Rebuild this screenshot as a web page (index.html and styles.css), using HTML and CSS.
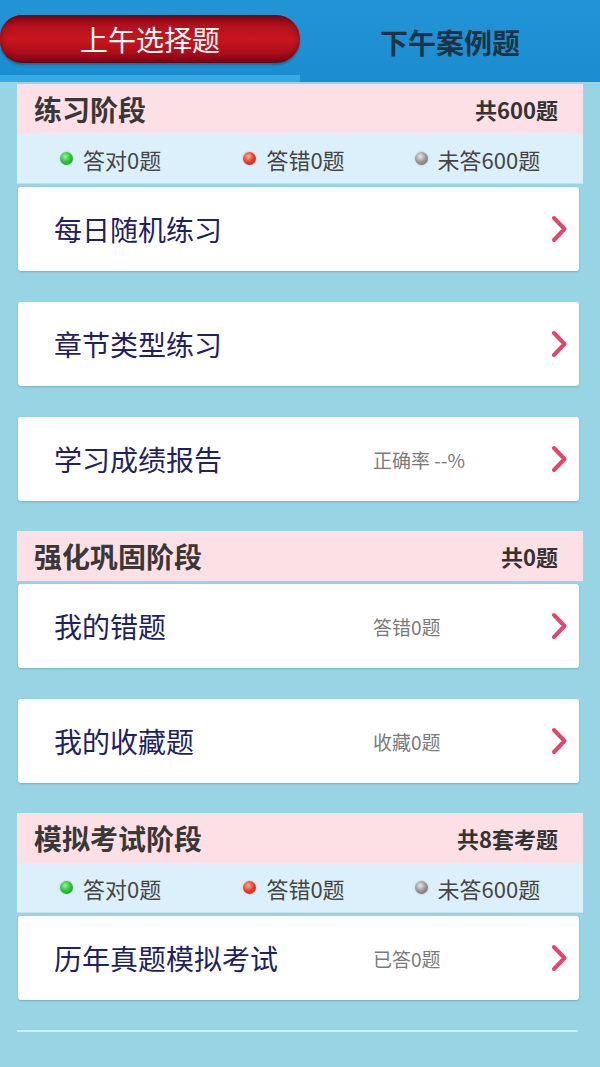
FILE: index.html
```html
<!DOCTYPE html>
<html lang="zh-CN">
<head>
<meta charset="utf-8">
<title>题库</title>
<link rel="stylesheet" href="styles.css">
</head>
<body>
<header class="tabs">
  <div class="tab tab-active">
    <div class="pill">上午选择题</div>
    <div class="indicator"></div>
  </div>
  <div class="tab tab-idle">下午案例题</div>
</header>

<main class="main">
  <section class="stage">
    <div class="stage-head"><span class="stage-title">练习阶段</span><span class="stage-count">共600题</span></div>
    <div class="stats">
      <div class="stat"><i class="dot dot-green"></i>答对0题</div>
      <div class="stat"><i class="dot dot-red"></i>答错0题</div>
      <div class="stat"><i class="dot dot-grey"></i>未答600题</div>
    </div>
    <a class="card"><span class="card-title">每日随机练习</span><span class="card-sub"></span><svg class="chev" viewBox="0 0 16 28"><path d="M3 3 L13.5 14 L3 25"/></svg></a>
    <a class="card card-gap"><span class="card-title">章节类型练习</span><span class="card-sub"></span><svg class="chev" viewBox="0 0 16 28"><path d="M3 3 L13.5 14 L3 25"/></svg></a>
    <a class="card card-gap"><span class="card-title">学习成绩报告</span><span class="card-sub">正确率 --%</span><svg class="chev" viewBox="0 0 16 28"><path d="M3 3 L13.5 14 L3 25"/></svg></a>
  </section>

  <section class="stage">
    <div class="stage-head"><span class="stage-title">强化巩固阶段</span><span class="stage-count">共0题</span></div>
    <a class="card"><span class="card-title">我的错题</span><span class="card-sub">答错0题</span><svg class="chev" viewBox="0 0 16 28"><path d="M3 3 L13.5 14 L3 25"/></svg></a>
    <a class="card card-gap"><span class="card-title">我的收藏题</span><span class="card-sub">收藏0题</span><svg class="chev" viewBox="0 0 16 28"><path d="M3 3 L13.5 14 L3 25"/></svg></a>
  </section>

  <section class="stage">
    <div class="stage-head"><span class="stage-title">模拟考试阶段</span><span class="stage-count">共8套考题</span></div>
    <div class="stats">
      <div class="stat"><i class="dot dot-green"></i>答对0题</div>
      <div class="stat"><i class="dot dot-red"></i>答错0题</div>
      <div class="stat"><i class="dot dot-grey"></i>未答600题</div>
    </div>
    <a class="card"><span class="card-title">历年真题模拟考试</span><span class="card-sub">已答0题</span><svg class="chev" viewBox="0 0 16 28"><path d="M3 3 L13.5 14 L3 25"/></svg></a>
  </section>

  <hr class="rule">
</main>
</body>
</html>
```

FILE: styles.css
```css
* { box-sizing: border-box; }

html, body {
  margin: 0;
  padding: 0;
}

body {
  width: 600px;
  min-height: 1067px;
  background: #97d5e5;
  font-family: "Noto Sans CJK SC", "Noto Sans", sans-serif;
}

.tabs {
  height: 82px;
  display: grid;
  grid-template-columns: 300px 300px;
  background: linear-gradient(to bottom, #2394d6, #1b8ccf);
}

.tab {
  display: flex;
  flex-direction: column;
}

.tab-active {
  padding-top: 15px;
  justify-content: space-between;
}

.pill {
  height: 48px;
  border-radius: 22px 24px 24px 22px;
  background: linear-gradient(to bottom, #7e0410 0%, #b3101c 22%, #c8161f 50%, #b00f1b 75%, #7c0510 100%);
  box-shadow: 0 2px 2px rgba(0, 40, 80, 0.35), inset 0 0 6px rgba(60, 0, 0, 0.5);
  color: #fff;
  font-size: 28px;
  line-height: 48px;
  text-align: center;
}

.indicator {
  height: 7px;
  background: #35aae3;
}

.tab-idle {
  align-items: center;
  justify-content: center;
  padding-top: 2px;
  color: #1c3346;
  font-size: 28px;
  font-weight: 700;
}

.main {
  padding: 2px 17px 0 17px;
}

.stage {
  margin-bottom: 30px;
}

.stage-head {
  height: 50px;
  display: flex;
  align-items: center;
  justify-content: space-between;
  padding: 0 25px 0 17px;
  background: #fde0e5;
}

.stage-title {
  font-size: 28px;
  font-weight: 700;
  color: #383838;
}

.stage-count {
  font-size: 22px;
  font-weight: 700;
  color: #333;
}

.stats {
  height: 50px;
  display: grid;
  grid-template-columns: 1fr 1fr 1fr;
  padding: 0 14px 0 2px;
  align-items: center;
  background: #dcf0fb;
  border-bottom: 1px solid #c6dfee;
}

.stat {
  display: flex;
  align-items: center;
  justify-content: center;
  gap: 10px;
  font-size: 22px;
  color: #454545;
}

.dot {
  width: 13px;
  height: 13px;
  border-radius: 50%;
  box-shadow: 0 0 2px rgba(0, 0, 0, 0.25);
}

.dot-green { background: radial-gradient(circle at 40% 35%, #9af39a 0%, #2fc63c 45%, #138a22 100%); }
.dot-red { background: radial-gradient(circle at 40% 35%, #ffb09a 0%, #e8432a 45%, #a81a0c 100%); }
.dot-grey { background: radial-gradient(circle at 40% 35%, #e8e8e8 0%, #9b9b9b 45%, #5e5e5e 100%); }

.card {
  height: 84px;
  margin: 3px 4px 0 1px;
  display: grid;
  grid-template-columns: 1fr 178px 16px;
  align-items: center;
  padding: 0 12px 0 36px;
  background: #fff;
  border-radius: 3px;
  box-shadow: 0 1px 2px rgba(40, 90, 110, 0.3);
}

.card-gap {
  margin-top: 31px;
}

.card-title {
  font-size: 28px;
  color: #1f2262;
}

.card-sub {
  font-size: 19px;
  color: #7a7a7a;
}

.chev {
  width: 16px;
  height: 28px;
}

.chev path {
  fill: none;
  stroke: #e0476d;
  stroke-width: 4;
  stroke-linecap: round;
  stroke-linejoin: round;
}

.rule {
  margin: 0 5px 0 0;
  border: 0;
  height: 2px;
  background: #cdeef6;
}
```
